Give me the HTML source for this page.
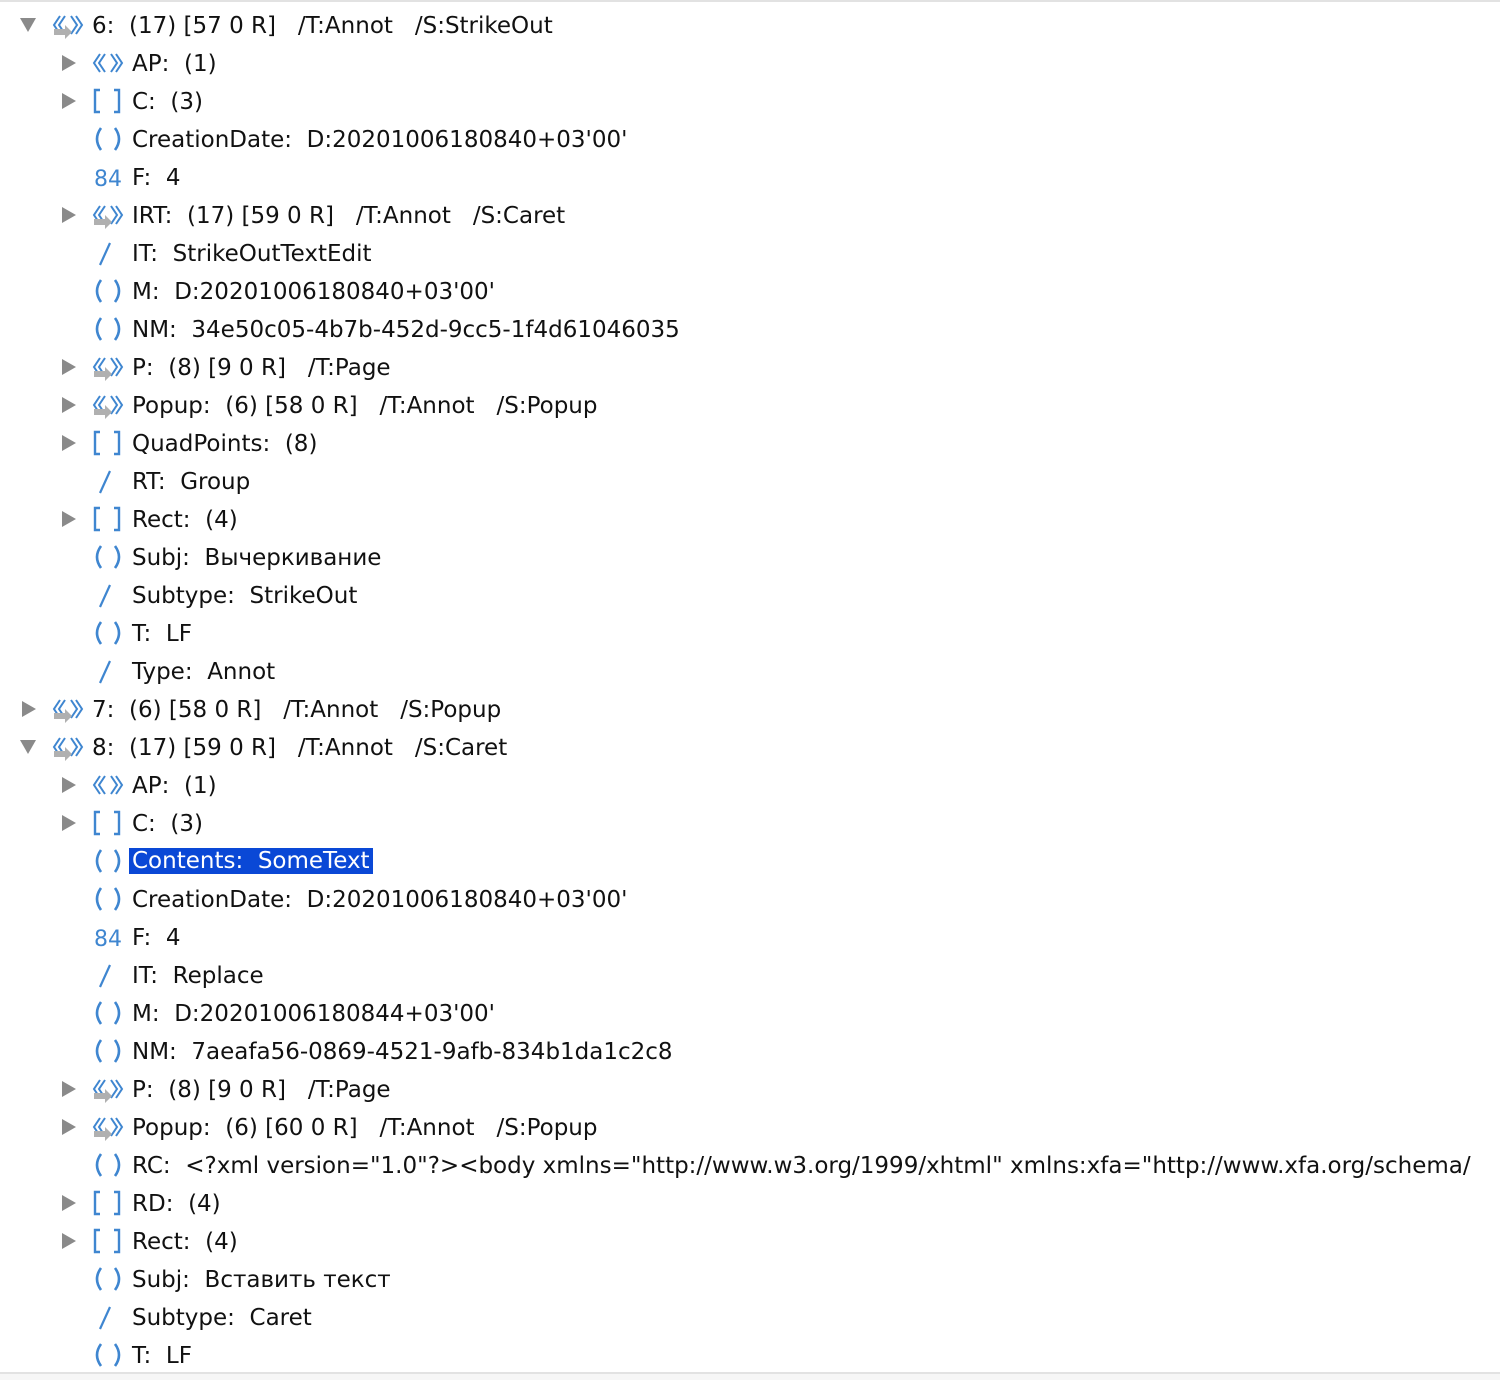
<!DOCTYPE html>
<html><head><meta charset="utf-8"><style>
html,body{margin:0;padding:0;width:1500px;height:1380px;background:#fff;overflow:hidden}
body{position:relative;font-family:"DejaVu Sans","Liberation Sans",sans-serif;font-size:23px;color:#111}
.top{position:absolute;left:0;top:0;width:1500px;height:2px;background:#e2e2e2}
.bot{position:absolute;left:0;top:1372px;width:1500px;height:8px;background:#f6f6f6;border-top:2px solid #e2e2e2}
.r{position:absolute;height:38px;line-height:38px;white-space:pre}
.tr{position:absolute;top:11px;width:0;height:0;border-top:8px solid transparent;border-bottom:8px solid transparent;border-left:14px solid #8a8a8a}
.td{position:absolute;top:12px;width:0;height:0;border-left:8px solid transparent;border-right:8px solid transparent;border-top:14px solid #8a8a8a}
.ic{position:absolute;top:5px;width:34px;height:28px}
.tx{position:absolute;top:1px}
.sel{background:#0a48d6;color:#fff;padding:0 3px 0 3px;margin-left:-3px}
</style></head><body>
<div class="top"></div>
<svg width="0" height="0" style="position:absolute">
<defs>
<g id="dict"><path d="M9 5 L3 14 L9 23 M14 5 L8 14 L14 23 M20 5 L26 14 L20 23 M25 5 L31 14 L25 23" fill="none" stroke="#3f86d0" stroke-width="2"/></g>
<g id="ref"><path d="M9 5 L3 14 L9 23 M14 5 L8 14 L14 23 M20 5 L26 14 L20 23 M25 5 L31 14 L25 23" fill="none" stroke="#3f86d0" stroke-width="2"/><path d="M3 18 L14 18 L14 14 L21 21 L14 28 L14 24 L3 24 Z" fill="#b0b0b0"/></g>
<g id="arr"><path d="M9 3 L4 3 L4 25 L9 25 M23 3 L28 3 L28 25 L23 25" fill="none" stroke="#3f86d0" stroke-width="2.4"/></g>
<g id="str"><path d="M10 3 Q2 14 10 25 M24 3 Q32 14 24 25" fill="none" stroke="#3f86d0" stroke-width="2.6"/></g>
<g id="name"><path d="M19 4 L9 26" fill="none" stroke="#3f86d0" stroke-width="2.2"/></g>
<g id="num"><text x="3" y="23" font-family="DejaVu Sans,sans-serif" font-size="22" fill="#3f86d0">84</text></g>
</defs></svg>

<div class="r" style="top:6px;left:0"><span class="td" style="left:20px"></span><svg class="ic" style="left:51px"><use href="#ref"/></svg><span class="tx" style="left:92px">6:  (17) [57 0 R]   /T:Annot   /S:StrikeOut</span></div>
<div class="r" style="top:44px;left:0"><span class="tr" style="left:62px"></span><svg class="ic" style="left:91px"><use href="#dict"/></svg><span class="tx" style="left:132px">AP:  (1)</span></div>
<div class="r" style="top:82px;left:0"><span class="tr" style="left:62px"></span><svg class="ic" style="left:91px"><use href="#arr"/></svg><span class="tx" style="left:132px">C:  (3)</span></div>
<div class="r" style="top:120px;left:0"><svg class="ic" style="left:91px"><use href="#str"/></svg><span class="tx" style="left:132px">CreationDate:  D:20201006180840+03'00'</span></div>
<div class="r" style="top:158px;left:0"><svg class="ic" style="left:91px"><use href="#num"/></svg><span class="tx" style="left:132px">F:  4</span></div>
<div class="r" style="top:196px;left:0"><span class="tr" style="left:62px"></span><svg class="ic" style="left:91px"><use href="#ref"/></svg><span class="tx" style="left:132px">IRT:  (17) [59 0 R]   /T:Annot   /S:Caret</span></div>
<div class="r" style="top:234px;left:0"><svg class="ic" style="left:91px"><use href="#name"/></svg><span class="tx" style="left:132px">IT:  StrikeOutTextEdit</span></div>
<div class="r" style="top:272px;left:0"><svg class="ic" style="left:91px"><use href="#str"/></svg><span class="tx" style="left:132px">M:  D:20201006180840+03'00'</span></div>
<div class="r" style="top:310px;left:0"><svg class="ic" style="left:91px"><use href="#str"/></svg><span class="tx" style="left:132px">NM:  34e50c05-4b7b-452d-9cc5-1f4d61046035</span></div>
<div class="r" style="top:348px;left:0"><span class="tr" style="left:62px"></span><svg class="ic" style="left:91px"><use href="#ref"/></svg><span class="tx" style="left:132px">P:  (8) [9 0 R]   /T:Page</span></div>
<div class="r" style="top:386px;left:0"><span class="tr" style="left:62px"></span><svg class="ic" style="left:91px"><use href="#ref"/></svg><span class="tx" style="left:132px">Popup:  (6) [58 0 R]   /T:Annot   /S:Popup</span></div>
<div class="r" style="top:424px;left:0"><span class="tr" style="left:62px"></span><svg class="ic" style="left:91px"><use href="#arr"/></svg><span class="tx" style="left:132px">QuadPoints:  (8)</span></div>
<div class="r" style="top:462px;left:0"><svg class="ic" style="left:91px"><use href="#name"/></svg><span class="tx" style="left:132px">RT:  Group</span></div>
<div class="r" style="top:500px;left:0"><span class="tr" style="left:62px"></span><svg class="ic" style="left:91px"><use href="#arr"/></svg><span class="tx" style="left:132px">Rect:  (4)</span></div>
<div class="r" style="top:538px;left:0"><svg class="ic" style="left:91px"><use href="#str"/></svg><span class="tx" style="left:132px">Subj:  Вычеркивание</span></div>
<div class="r" style="top:576px;left:0"><svg class="ic" style="left:91px"><use href="#name"/></svg><span class="tx" style="left:132px">Subtype:  StrikeOut</span></div>
<div class="r" style="top:614px;left:0"><svg class="ic" style="left:91px"><use href="#str"/></svg><span class="tx" style="left:132px">T:  LF</span></div>
<div class="r" style="top:652px;left:0"><svg class="ic" style="left:91px"><use href="#name"/></svg><span class="tx" style="left:132px">Type:  Annot</span></div>
<div class="r" style="top:690px;left:0"><span class="tr" style="left:22px"></span><svg class="ic" style="left:51px"><use href="#ref"/></svg><span class="tx" style="left:92px">7:  (6) [58 0 R]   /T:Annot   /S:Popup</span></div>
<div class="r" style="top:728px;left:0"><span class="td" style="left:20px"></span><svg class="ic" style="left:51px"><use href="#ref"/></svg><span class="tx" style="left:92px">8:  (17) [59 0 R]   /T:Annot   /S:Caret</span></div>
<div class="r" style="top:766px;left:0"><span class="tr" style="left:62px"></span><svg class="ic" style="left:91px"><use href="#dict"/></svg><span class="tx" style="left:132px">AP:  (1)</span></div>
<div class="r" style="top:804px;left:0"><span class="tr" style="left:62px"></span><svg class="ic" style="left:91px"><use href="#arr"/></svg><span class="tx" style="left:132px">C:  (3)</span></div>
<div class="r" style="top:842px;left:0"><svg class="ic" style="left:91px"><use href="#str"/></svg><span class="tx" style="left:132px;top:0"><span class="sel">Contents:  SomeText</span></span></div>
<div class="r" style="top:880px;left:0"><svg class="ic" style="left:91px"><use href="#str"/></svg><span class="tx" style="left:132px">CreationDate:  D:20201006180840+03'00'</span></div>
<div class="r" style="top:918px;left:0"><svg class="ic" style="left:91px"><use href="#num"/></svg><span class="tx" style="left:132px">F:  4</span></div>
<div class="r" style="top:956px;left:0"><svg class="ic" style="left:91px"><use href="#name"/></svg><span class="tx" style="left:132px">IT:  Replace</span></div>
<div class="r" style="top:994px;left:0"><svg class="ic" style="left:91px"><use href="#str"/></svg><span class="tx" style="left:132px">M:  D:20201006180844+03'00'</span></div>
<div class="r" style="top:1032px;left:0"><svg class="ic" style="left:91px"><use href="#str"/></svg><span class="tx" style="left:132px">NM:  7aeafa56-0869-4521-9afb-834b1da1c2c8</span></div>
<div class="r" style="top:1070px;left:0"><span class="tr" style="left:62px"></span><svg class="ic" style="left:91px"><use href="#ref"/></svg><span class="tx" style="left:132px">P:  (8) [9 0 R]   /T:Page</span></div>
<div class="r" style="top:1108px;left:0"><span class="tr" style="left:62px"></span><svg class="ic" style="left:91px"><use href="#ref"/></svg><span class="tx" style="left:132px">Popup:  (6) [60 0 R]   /T:Annot   /S:Popup</span></div>
<div class="r" style="top:1146px;left:0"><svg class="ic" style="left:91px"><use href="#str"/></svg><span class="tx" style="left:132px">RC:  &lt;?xml version="1.0"?&gt;&lt;body xmlns="http://www.w3.org/1999/xhtml" xmlns:xfa="http://www.xfa.org/schema/</span></div>
<div class="r" style="top:1184px;left:0"><span class="tr" style="left:62px"></span><svg class="ic" style="left:91px"><use href="#arr"/></svg><span class="tx" style="left:132px">RD:  (4)</span></div>
<div class="r" style="top:1222px;left:0"><span class="tr" style="left:62px"></span><svg class="ic" style="left:91px"><use href="#arr"/></svg><span class="tx" style="left:132px">Rect:  (4)</span></div>
<div class="r" style="top:1260px;left:0"><svg class="ic" style="left:91px"><use href="#str"/></svg><span class="tx" style="left:132px">Subj:  Вставить текст</span></div>
<div class="r" style="top:1298px;left:0"><svg class="ic" style="left:91px"><use href="#name"/></svg><span class="tx" style="left:132px">Subtype:  Caret</span></div>
<div class="r" style="top:1336px;left:0"><svg class="ic" style="left:91px"><use href="#str"/></svg><span class="tx" style="left:132px">T:  LF</span></div>
<div class="bot"></div>
</body></html>
